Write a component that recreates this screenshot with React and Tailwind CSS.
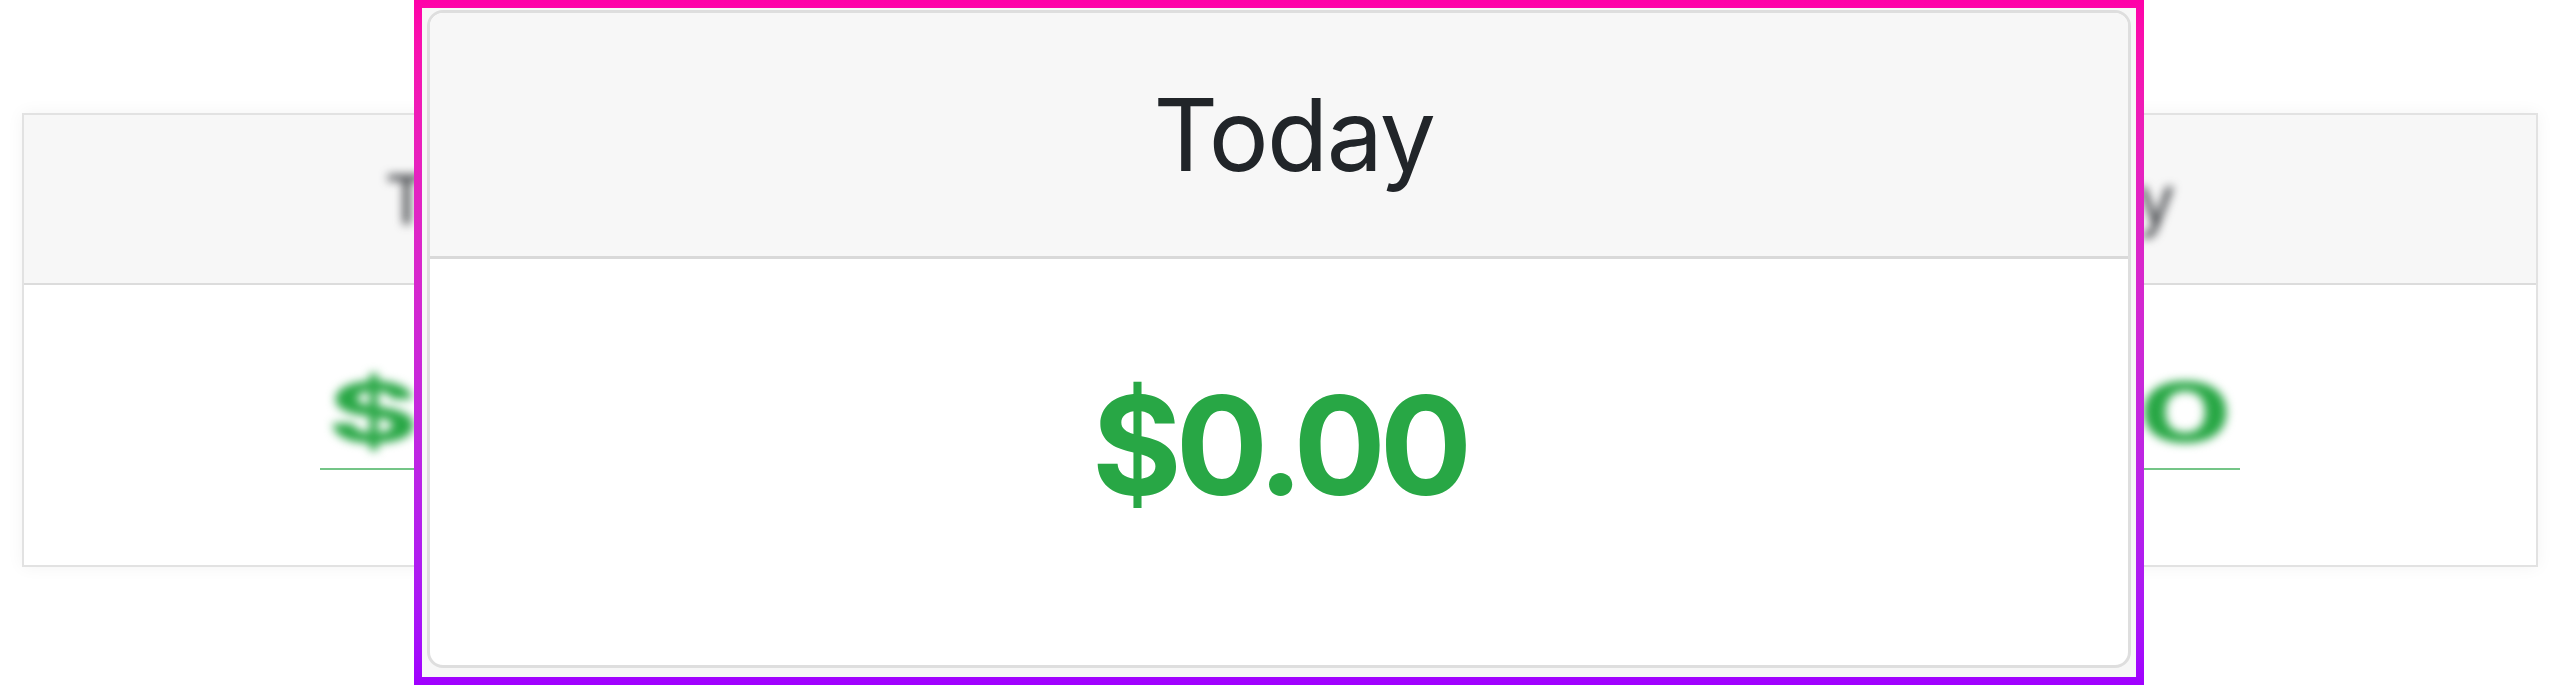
import React from 'react';

const Spread = ({ text, className, stretch }) => {
  const last = text.length - 1;
  return (
    <div className={`flex justify-between ${className}`}>
      {text.split('').map((ch, i) => (
        <span
          key={i}
          className={`inline-block ${stretch ? 'scale-x-[1.7]' : ''} ${
            i === 0 ? 'origin-left' : i === last ? 'origin-right' : ''
          }`}
        >
          {ch}
        </span>
      ))}
    </div>
  );
};

export default function App() {
  return (
    <div className="relative h-[685px] w-full overflow-hidden bg-white font-['Inter',sans-serif]">
      {/* blurred card behind */}
      <div className="px-[22px] pt-[113px]">
        <div className="flex h-[454px] flex-col border-2 border-[#e2e2e2] bg-white shadow-[0_0_16px_rgba(0,0,0,0.05)]">
          <div className="flex h-[170px] items-center border-b-2 border-[#dcdcdc] bg-[#f7f7f7] px-[361px]">
            <Spread
              text="Today"
              className="w-full text-[67px] leading-none text-[#3a3d41] blur-[5px]"
            />
          </div>
          <div className="flex flex-1 flex-col justify-center px-[296px] pb-[10px]">
            <Spread
              text="$0.00"
              stretch
              className="px-[7px] text-[83px] font-bold leading-none text-[#28a745] blur-[5px]"
            />
            <div className="mt-[14px] h-[2px] bg-[#74c587]" />
          </div>
        </div>
      </div>

      {/* highlighted card */}
      <div className="absolute left-[414px] top-0 h-[685px] w-[1730px] bg-gradient-to-b from-[#ff00a8] to-[#a000ff] p-[8px]">
        <div className="h-full bg-[#f7f7f7] px-[5px] pb-[9px] pt-[2px]">
          <div className="flex h-full flex-col overflow-hidden rounded-[16px] border-[3px] border-[#dedede] bg-white">
            <div className="flex h-[246px] items-center justify-center border-b-[3px] border-[#d9d9d9] bg-[#f7f7f7] pl-[30px]">
              <h3 className="text-[100px] leading-none tracking-[-0.016em] text-[#212529]">Today</h3>
            </div>
            <div className="flex flex-1 items-center justify-center pb-[34px]">
              <p className="text-[137px] font-bold leading-none tracking-[-0.045em] text-[#28a745]">
                $0.00
              </p>
            </div>
          </div>
        </div>
      </div>
    </div>
  );
}
